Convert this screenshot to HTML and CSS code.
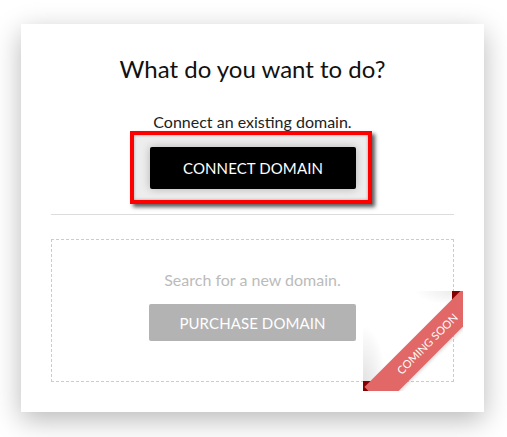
FILE: index.html
```html
<!DOCTYPE html>
<html lang="en">
<head>
<meta charset="utf-8">
<title>Domain</title>
<link rel="stylesheet" href="styles.css">
</head>
<body>
<div class="card">
  <h1 class="title">What do you want to do?</h1>
  <p class="lead">Connect an existing domain.</p>
  <div class="highlight-row">
    <div class="highlight">
      <button class="btn btn-dark">CONNECT DOMAIN</button>
    </div>
  </div>
  <hr class="sep">
  <div class="soon-box">
    <p class="lead lead-muted">Search for a new domain.</p>
    <button class="btn btn-gray">PURCHASE DOMAIN</button>
    <div class="ribbon"><span class="ribbon-band">COMING SOON</span></div>
  </div>
</div>
</body>
</html>
```
FILE: styles.css
```css
html, body {
  margin: 0;
  padding: 0;
  background: #fff;
}
body {
  width: 507px;
  height: 437px;
  overflow: hidden;
  font-family: Lato, "Open Sans", sans-serif;
}
.card {
  box-sizing: border-box;
  width: 463px;
  height: 388px;
  margin: 24px 0 0 21px;
  padding: 30px 30px 30px;
  background: #fff;
  box-shadow: 0 8px 26px rgba(0, 0, 0, 0.28);
  display: flex;
  flex-direction: column;
  align-items: stretch;
}
.title {
  margin: 0;
  font-size: 24px;
  line-height: 30px;
  font-weight: 400;
  color: #111;
  text-align: center;
}
.lead {
  margin: 29px 0 0;
  font-size: 16px;
  line-height: 18px;
  color: #222;
  text-align: center;
}
.highlight-row {
  display: flex;
  justify-content: center;
}
.highlight {
  margin-left: -3px;
  padding: 12px 12px 11px 16px;
  border: 4px solid #f00;
  background: #ededed;
  box-shadow: 3px 3px 4px rgba(0, 0, 0, 0.65), inset 0 0 3px rgba(0, 0, 0, 0.35);
  display: flex;
}
.btn {
  display: flex;
  align-items: center;
  justify-content: center;
  border: 0;
  border-radius: 2px;
  font-family: Lato, "Open Sans", sans-serif;
  font-size: 15px;
  letter-spacing: 0.1px;
  color: #fff;
  padding: 0;
}
.btn-dark {
  width: 206px;
  height: 42px;
  background: #000;
  box-shadow: 0 0 8px rgba(0, 0, 0, 0.25);
}
.sep {
  margin: 10px 0 0;
  border: 0;
  border-top: 1px solid #dcdcdc;
  height: 0;
}
.soon-box {
  position: relative;
  margin-top: 24px;
  height: 143px;
  box-sizing: border-box;
  border: 1px dashed #ccc;
  padding-top: 31px;
  display: flex;
  flex-direction: column;
  align-items: center;
}
.lead-muted {
  margin: 0;
  color: #bbb;
}
.btn-gray {
  margin-top: 15px;
  width: 207px;
  height: 37px;
  background: #b3b3b3;
}
.ribbon {
  position: absolute;
  right: -10px;
  bottom: -10px;
  width: 100px;
  height: 100px;
  overflow: hidden;
  background:
    radial-gradient(ellipse 24px 66px at 0 100%, rgba(0, 0, 0, 0.13), rgba(0, 0, 0, 0) 100%),
    radial-gradient(ellipse 40px 14px at 92% 0, rgba(0, 0, 0, 0.08), rgba(0, 0, 0, 0) 100%);
}
.ribbon::before,
.ribbon::after {
  content: "";
  position: absolute;
  width: 10px;
  height: 10px;
  background: #870000;
}
.ribbon::before {
  top: 0;
  right: 1px;
}
.ribbon::after {
  left: 0;
  bottom: 0;
}
.ribbon-band {
  position: absolute;
  z-index: 1;
  left: -11px;
  top: 39px;
  width: 150px;
  height: 27px;
  background: #e26767;
  color: #fff;
  font-size: 11px;
  line-height: 27px;
  text-align: center;
  transform: rotate(-45deg);
  box-shadow: 0 2px 3px rgba(0, 0, 0, 0.12);
}
```
